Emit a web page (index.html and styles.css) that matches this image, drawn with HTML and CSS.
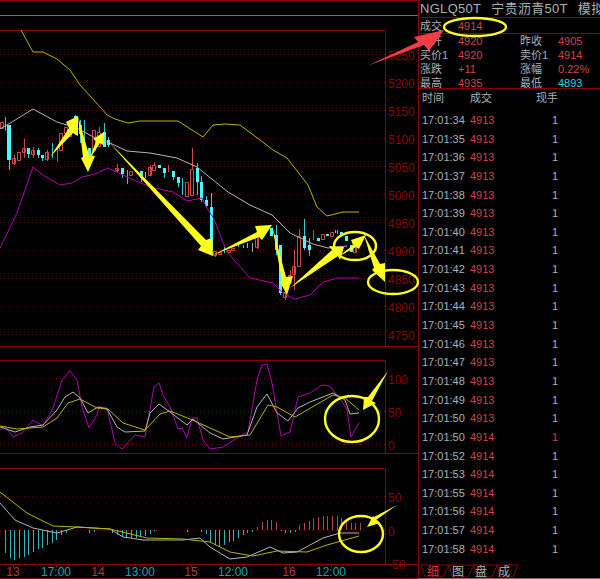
FILE: index.html
```html
<!DOCTYPE html>
<html lang="zh-CN">
<head>
  <meta charset="UTF-8" />
  <title>NGLQ50T 宁贵沥青50T</title>
  <link rel="stylesheet" href="styles.css">
</head>
<body>

  <div class="screen">

    <svg class="chart" width="418" height="579" viewBox="0 0 418 579">
      <!-- frames -->
      <path class="frame" d="M0 .5H418M0 30.5H385.5V346M0 346.5H418M0 360.5H385.5V454M0 453.5H418M0 468.5H385.5V564M0 564.5H418M0 578.5H418"/>
      <path class="rule" d="M0 15.5H418"/>

      <!-- dotted levels -->
      <path class="dots" d="M0 54H385M0 82H385M0 110H385M0 138H385M0 166H385M0 194H385M0 222H385M0 250H385M0 278H385M0 306H385M0 334H385M0 378H385M0 411H385M0 444H385M0 496H385M0 530H385"/>

      <!-- axis ticks -->
      <path class="frame" d="M13.5 564V568M56.5 564V568M98.5 564V568M140.5 564V568M191.5 564V568M233.5 564V568M289.5 564V568M331.5 564V568"/>

      <!-- candles -->
      <path class="wick-cyan" d="M5 117V131M9 125V170M28 148V158M38 148V158M42 155V161M52 143V158M75 115V135M80 120V143M84 120V147M89 148V155M104 123V147M108 137V147M122 168V178M127 170V184M141 171V182M164 168V178M173 171V180M178 177V187M182 178V195M197 163V195M201 176V202M206 196V208M211 193V255M224 247V253M238 245V247M243 245V248M271 228V236M276 225V255M280 245V295M304 219V250M309 238V256M318 238V241M327 234V236M337 230V234M341 232V236M346 236V241M351 245V252"/>
      <path class="body-cyan" d="M7 125h4v35h-4zM27 148h3v6h-3zM37 150h3v5h-3zM41 155h3v3h-3zM74 116h3v14h-3zM79 125h3v9h-3zM88 148h3v7h-3zM103 132h3v15h-3zM107 140h3v5h-3zM121 168h3v6h-3zM140 171h3v7h-3zM158 165h3v3h-3zM163 168h3v5h-3zM172 171h3v6h-3zM177 177h3v6h-3zM196 168h3v14h-3zM200 182h3v18h-3zM205 200h3v6h-3zM210 207h3v43h-3zM270 228h3v8h-3zM275 235h3v15h-3zM279 245h3v48h-3zM303 236h3v12h-3zM308 245h3v5h-3zM317 238h3v3h-3zM326 234h3v2h-3zM340 232h3v4h-3zM345 236h3v5h-3zM350 245h3v7h-3z"/>
      <path class="wick-red" d="M14 155V165M24 139V158M33 147V158M47 150V161M57 148V162M99 127V132M117 164V172M150 165V176M154 162V165M168 165V172M192 148V169M215 253V257M257 237V249M285 292V300M290 270V283M294 250V290M299 229V236M313 230V240M355 245V253"/>
      <path class="body-red" d="M.5 122.500h3v6h-3zM12.500 158.500h3v5h-3zM17.500 152.500h3v8h-3zM22.500 148.500h3v4h-3zM31.500 150.500h3v4h-3zM45.500 152.500h3v7h-3zM59.500 133.500h3v17h-3zM64.500 127.500h3v6h-3zM68.500 130.500h3v6h-3zM92.500 130.500h3v20h-3zM97.500 132.500h3v14h-3zM115.500 168.500h3v2h-3zM129.500 171.500h3v4h-3zM148.500 167.500h3v8h-3zM152.500 165.500h3v5h-3zM185.500 182.500h3v14h-3zM190.500 169.500h3v26h-3zM213.500 251.500h3v4h-3zM218.500 252.500h3v2h-3zM227.500 250.500h3v2h-3zM231.500 248.500h3v2h-3zM255.500 237.500h3v10h-3zM283.500 292.500h3v5h-3zM288.500 275.500h3v8h-3zM292.500 266.500h3v8h-3zM297.500 236.500h3v30h-3zM321.500 234.500h3v5h-3zM330.500 232.500h3v4h-3zM353.500 245.500h3v7h-3zM358.500 242.500h3v2h-3z"/>
      <path class="wick-gray" d="M145 172V178M247 243V248M252 243V252M335 230V233"/>

      <!-- bands -->
      <polyline class="line-yellow" points="21,30 33,52 43,52 57,59 70,70 80,85 102,109 107,115 115,119 128,123 140,121 178,121 192,130 203,137 213,125 225,124 240,125 260,140 273,150 287,158 308,185 317,207 327,216 343,212 359,212"/>
      <polyline class="line-gray" points="0,129 12,122 33,109 57,122 77,128 97,139 110,143 127,151 150,153 177,158 197,167 228,192 250,205 272,215 290,233 313,244 328,248 347,246"/>
      <polyline class="line-magenta" points="0,248 17,213 33,167 43,175 60,185 72,183 82,177 95,174 108,168 127,177 150,187 173,192 187,201 202,198 208,210 213,217 227,252 250,278 273,283 283,293 295,299 310,295 323,282 338,278 359,278"/>

      <!-- oscillator -->
      <polyline class="line-magenta" points="0,430 5,426 13,437 22,433 33,420 43,426 53,408 62,380 70,371 77,380 82,407 89,428 97,415 99,407 107,408 115,443 122,449 135,435 145,437 154,387 159,383 163,395 170,407 178,429 182,428 187,438 192,418 197,418 203,440 210,449 223,447 240,436 248,432 257,380 262,365 267,364 272,383 281,436 290,432 298,397 310,393 322,385 330,386 343,403 347,410 351,437 359,423"/>
      <polyline class="line-gray" points="0,427 15,432 30,427 43,425 57,410 65,397 73,392 80,398 88,413 98,407 107,409 117,427 125,432 145,431 150,413 159,404 170,412 187,425 193,419 210,433 223,439 247,435 257,407 267,394 277,413 288,421 298,408 310,402 333,393 345,400 350,414 359,413"/>
      <polyline class="line-yellow" points="0,426 17,429 43,427 57,418 68,403 80,399 97,408 108,409 123,423 145,430 160,414 170,411 190,419 210,428 230,437 250,435 268,405 277,407 295,417 333,395 345,398 359,410"/>

      <!-- macd bars -->
      <path class="bar-cyan" d="M5 530V553M10 530V558M14 530V560M19 530V558M24 530V557M28 530V555M33 530V552M38 530V549M42 530V548M47 530V545M52 530V543M56 530V540M61 530V535M66 530V533M89 530V533M94 530V532M112 530V533M117 530V535M122 530V537M126 530V537M131 530V538M136 530V538M140 530V537M145 530V536M150 530V534M154 530V531M187 530V532M201 530V532M206 530V534M210 530V542M215 530V545M219 530V547M224 530V545M229 530V542M233 530V541M238 530V538M243 530V535M247 530V533M252 530V532M281 530V531M285 530V533M290 530V533M295 530V532"/>
      <path class="bar-red" d="M257 530V527M262 530V522M267 530V520M271 530V520M276 530V522M299 530V525M304 530V523M309 530V521M313 530V518M318 530V517M323 530V516M327 530V516M332 530V516M337 530V516M341 530V518M346 530V521M351 530V523M355 530V523M360 530V523"/>
      <polyline class="line-gray" points="0,503 15,520 33,528 57,533 77,527 110,529 123,537 143,540 183,540 200,538 210,547 230,559 247,557 270,547 283,553 297,552 323,538 340,533 359,533"/>
      <polyline class="line-yellow" points="0,492 27,513 53,526 77,527 110,529 147,538 183,539 210,542 230,552 253,556 277,551 307,552 327,545 359,536"/>

      <!-- axis labels -->
      <g class="axis">
        <text x="388" y="60">5250</text>
        <text x="388" y="88">5200</text>
        <text x="388" y="116">5150</text>
        <text x="388" y="144">5100</text>
        <text x="388" y="172">5050</text>
        <text x="388" y="200">5000</text>
        <text x="388" y="228">4950</text>
        <text x="388" y="256">4900</text>
        <text x="388" y="284">4850</text>
        <text x="388" y="312">4800</text>
        <text x="388" y="340">4750</text>
        <text x="388" y="384">100</text>
        <text x="388" y="417">50</text>
        <text x="388" y="450">0</text>
        <text x="388" y="502">50</text>
        <text x="388" y="536">0</text>
        <text x="388" y="569">-50</text>
      </g>
      <g class="dates">
        <text x="13" y="576">13</text>
        <text x="98" y="576">14</text>
        <text x="191" y="576">15</text>
        <text x="289" y="576">16</text>
      </g>
      <g class="times">
        <text x="56" y="576">17:00</text>
        <text x="140" y="576">13:00</text>
        <text x="233" y="576">12:00</text>
        <text x="331" y="576">12:00</text>
      </g>
    </svg>

    <div class="quote">
      <div class="quote-title">
        <span>NGLQ50T</span>
        <span>宁贵沥青50T</span>
        <span>模拟</span>
      </div>

      <div class="last-row">
        <span>成交</span>
        <span class="red">4914</span>
      </div>

      <div class="stats">
        <span>今开</span><span class="red">4920</span><span>昨收</span><span class="red">4905</span>
        <span>买价1</span><span class="red">4920</span><span>卖价1</span><span class="red">4914</span>
        <span>涨跌</span><span class="red">+11</span><span>涨幅</span><span class="red">0.22%</span>
        <span>最高</span><span class="red">4935</span><span>最低</span><span class="cyan">4893</span>
      </div>

      <div class="tick-head">
        <span>时间</span><span>成交</span><span class="vol">现手</span>
      </div>

      <div class="ticks">
        <div class="tick"><span>17:01:34</span><span class="red">4913</span><span class="vol">1</span></div>
        <div class="tick"><span>17:01:35</span><span class="red">4913</span><span class="vol">1</span></div>
        <div class="tick"><span>17:01:36</span><span class="red">4913</span><span class="vol">1</span></div>
        <div class="tick"><span>17:01:37</span><span class="red">4913</span><span class="vol">1</span></div>
        <div class="tick"><span>17:01:38</span><span class="red">4913</span><span class="vol">1</span></div>
        <div class="tick"><span>17:01:39</span><span class="red">4913</span><span class="vol">1</span></div>
        <div class="tick"><span>17:01:40</span><span class="red">4913</span><span class="vol">1</span></div>
        <div class="tick"><span>17:01:41</span><span class="red">4913</span><span class="vol">1</span></div>
        <div class="tick"><span>17:01:42</span><span class="red">4913</span><span class="vol">1</span></div>
        <div class="tick"><span>17:01:43</span><span class="red">4913</span><span class="vol">1</span></div>
        <div class="tick"><span>17:01:44</span><span class="red">4913</span><span class="vol">1</span></div>
        <div class="tick"><span>17:01:45</span><span class="red">4913</span><span class="vol">1</span></div>
        <div class="tick"><span>17:01:46</span><span class="red">4913</span><span class="vol">1</span></div>
        <div class="tick"><span>17:01:47</span><span class="red">4913</span><span class="vol">1</span></div>
        <div class="tick"><span>17:01:48</span><span class="red">4913</span><span class="vol">1</span></div>
        <div class="tick"><span>17:01:49</span><span class="red">4913</span><span class="vol">1</span></div>
        <div class="tick"><span>17:01:50</span><span class="red">4913</span><span class="vol">1</span></div>
        <div class="tick"><span>17:01:50</span><span class="red">4914</span><span class="vol red">1</span></div>
        <div class="tick"><span>17:01:52</span><span class="red">4914</span><span class="vol">1</span></div>
        <div class="tick"><span>17:01:53</span><span class="red">4914</span><span class="vol">1</span></div>
        <div class="tick"><span>17:01:55</span><span class="red">4914</span><span class="vol">1</span></div>
        <div class="tick"><span>17:01:56</span><span class="red">4914</span><span class="vol">1</span></div>
        <div class="tick"><span>17:01:57</span><span class="red">4914</span><span class="vol">1</span></div>
        <div class="tick"><span>17:01:58</span><span class="red">4914</span><span class="vol">1</span></div>
      </div>

      <svg class="tabs" width="100" height="14" viewBox="0 0 100 14">
        <path class="tab-edge" d="M2 1L6 13H24L30 1L33 13H49L55 1L58 13H73L78 1L81 13H94L99 1H2"/>
        <text class="tab-on" x="8" y="12">细</text>
        <text x="33" y="12">图</text>
        <text x="56" y="12">盘</text>
        <text x="79" y="12">成</text>
      </svg>
    </div>

    <!-- hand drawn marks on top of the screenshot -->
    <svg class="marks" width="600" height="579" viewBox="0 0 600 579">
      <polygon class="mark-red" points="367,66 418,42 414,37 444,30 429,51 424,45"/>
      <ellipse class="ring" cx="475" cy="27" rx="31" ry="9"/>
      <g class="arrows">
        <polygon points="50,157 69,128 66,122 78,116 78,136 73,133"/>
        <polygon points="78,116 89,155 95,156 88,172 81,158 83,157"/>
        <polygon points="89,160 96,141 93,139 104,132 103,145 100,143"/>
        <polygon points="108,141 206,240 212,238 213,256 198,250 201,246"/>
        <polygon points="213,255 257,232 255,226 272,225 262,240 259,237"/>
        <polygon points="272,225 286,277 293,276 287,295 280,282 282,281"/>
        <polygon points="290,288 332,250 329,246 344,247 340,260 338,256"/>
        <polygon points="338,257 353,245 351,240 366,235 359,249 356,247"/>
        <polygon points="364,235 380,264 385,263 385,282 372,270 374,268"/>
        <polygon points="388,371 372,401 376,403 363,410 364,397 368,397"/>
        <polygon points="397,505 376,520 380,523 367,527 373,516 374,517"/>
      </g>
      <ellipse class="ring" cx="355" cy="246" rx="21" ry="14"/>
      <ellipse class="ring" cx="393" cy="282" rx="25" ry="12"/>
      <ellipse class="ring" cx="352" cy="419" rx="27" ry="23"/>
      <ellipse class="ring" cx="361" cy="534" rx="22" ry="18"/>
    </svg>

  </div>

</body>
</html>
```

FILE: styles.css
```css
* {
  margin: 0;
  padding: 0;
  box-sizing: border-box;
}

body {
  background: #000;
  color: #a9b3b6;
  font-family: "Liberation Sans", "Noto Sans CJK SC", sans-serif;
  font-size: 11px;
  overflow: hidden;
}

.screen {
  position: relative;
  display: flex;
  width: 600px;
  height: 579px;
  overflow: hidden;
}

.chart {
  flex: none;
  display: block;
}

.chart path,
.chart polyline {
  fill: none;
}

.frame {
  stroke: #8c0000;
}

.rule {
  stroke: #6e6e6e;
}

.dots {
  stroke: #7a0000;
  stroke-dasharray: 1 3;
  transform: translateY(0.5px);
}

.line-yellow {
  stroke: #b9b400;
}

.line-gray {
  stroke: #b5b5b5;
}

.line-magenta {
  stroke: #b400b4;
}

.chart .body-cyan {
  fill: #4ff;
}

/* half pixel shift keeps the 1px strokes crisp */
.wick-cyan,
.wick-red,
.wick-gray,
.bar-cyan,
.bar-red {
  transform: translateX(0.5px);
}

.wick-cyan {
  stroke: #3cc;
}

.bar-cyan {
  stroke: #2fb4b9;
}

.wick-red {
  stroke: #d04a4a;
}

.bar-red {
  stroke: #b84444;
}

.body-red {
  stroke: #d04a4a;
}

.wick-gray {
  stroke: #aaa;
}

.axis text {
  fill: #8e0000;
  font-size: 12px;
}

.dates text,
.times text {
  font-size: 12px;
  text-anchor: middle;
}

.dates text {
  fill: #b23a3a;
}

.times text {
  fill: #17a5ad;
}

.quote {
  flex: 1;
  display: flex;
  flex-direction: column;
  min-width: 0;
  border-left: 1px solid #8c0000;
  border-bottom: 1px solid #6e6e6e;
  white-space: nowrap;
}

.red {
  color: #cf4545;
}

.cyan {
  color: #19dcdc;
}

.quote-title {
  display: flex;
  gap: 10px;
  height: 18px;
  padding-left: 1px;
  line-height: 17px;
  font-size: 13px;
  letter-spacing: 0.3px;
  border-bottom: 1px solid #8c0000;
}

.last-row {
  display: grid;
  grid-template-columns: 38px auto;
  height: 16px;
  padding-left: 1px;
  line-height: 16px;
  border-bottom: 1px solid #8c0000;
}

.stats {
  display: grid;
  grid-template-columns: 38px 62px 38px 1fr;
  grid-auto-rows: 14px;
  height: 55px;
  padding-left: 1px;
  line-height: 14px;
  border-bottom: 1px solid #8c0000;
}

.tick-head,
.tick {
  display: grid;
  grid-template-columns: 48px 66px 22px;
  padding-left: 3px;
}

.tick-head {
  height: 22px;
  line-height: 19px;
}

.tick {
  height: 18.65px;
  line-height: 18.65px;
}

.vol {
  text-align: right;
}

.tabs {
  display: block;
  margin-top: auto;
  flex: none;
}

.tab-edge {
  fill: none;
  stroke: #8c0000;
}

.tabs text {
  fill: #a9b3b6;
  font-size: 12px;
}

.tabs .tab-on {
  fill: #e03030;
}

.marks {
  position: absolute;
  top: 0;
  left: 0;
}

.mark-red {
  fill: #f23c46;
}

.arrows polygon {
  fill: #ffff1e;
}

.ring {
  fill: none;
  stroke: #ffff1e;
  stroke-width: 2.4;
}
```
